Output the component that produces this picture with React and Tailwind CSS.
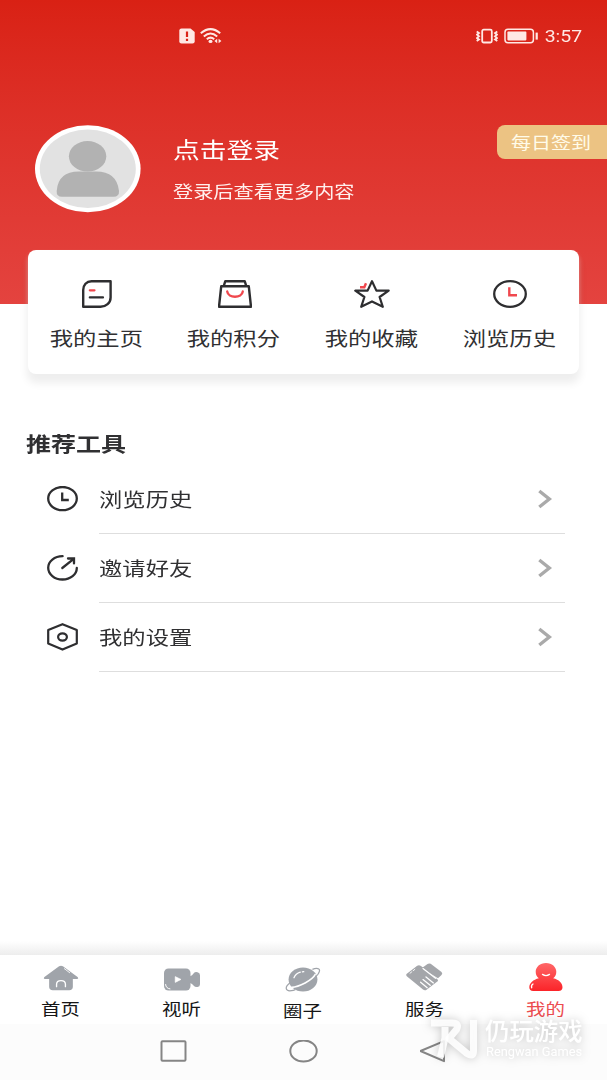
import { useState } from "react";

function Wide({ children, className = "" }) {
  return (
    <span className={`inline-block whitespace-nowrap scale-x-[1.215] ${className}`}>
      {children}
    </span>
  );
}

function HomepageIcon() {
  return (
    <svg width="30" height="28" viewBox="0 0 30 28" fill="none" strokeLinecap="round">
      <path
        d="M9.5 1.2H28.6V17.5C28.6 23 24 26.8 18.5 26.8H1.2V10C1.2 5 4.5 1.2 9.5 1.2Z"
        stroke="#2e2e30"
        strokeWidth="2.4"
        strokeLinejoin="round"
      />
      <path d="M7.8 10.3H12.5" stroke="#f0484e" strokeWidth="2.2" />
      <path d="M7.8 17.4H21" stroke="#2e2e30" strokeWidth="2.2" />
    </svg>
  );
}

function PointsIcon() {
  return (
    <svg width="34" height="28" viewBox="0 0 34 28" fill="none" strokeLinejoin="round" strokeLinecap="round">
      <path d="M3.2 6.3H30.8L33 26.8H1Z" stroke="#2e2e30" strokeWidth="2.4" />
      <path d="M5.8 5.8L7.3 1.2H26.7L28.2 5.8" stroke="#2e2e30" strokeWidth="2.4" />
      <path d="M9.2 11.5C10.2 18.5 23.8 18.5 24.8 11.5" stroke="#f0484e" strokeWidth="2.3" />
    </svg>
  );
}

function FavoriteIcon() {
  return (
    <svg width="36" height="28" viewBox="0 0 36 28" fill="none">
      <path
        d="M18 1.2L22.4 10.6H34.7L25.6 17L28.8 26.8L18 21.4L7.2 26.8L10.4 17L1.3 10.6H13.6Z"
        stroke="#2e2e30"
        strokeWidth="2.2"
        strokeLinejoin="round"
      />
      <path d="M6 7.2H10.3L12 3.2" stroke="#f0484e" strokeWidth="2.4" />
    </svg>
  );
}

function HistoryIcon() {
  return (
    <svg width="34" height="28" viewBox="0 0 34 28" fill="none">
      <ellipse cx="17" cy="14" rx="15.8" ry="12.8" stroke="#2e2e30" strokeWidth="2.3" />
      <path d="M16.3 7.3V15.2H24" stroke="#f0484e" strokeWidth="2.4" />
    </svg>
  );
}

function ClockIcon() {
  return (
    <svg width="31" height="26" viewBox="0 0 31 26" fill="none">
      <ellipse cx="15.5" cy="12.6" rx="14.3" ry="11.6" stroke="#2e2e30" strokeWidth="2.3" />
      <path d="M15.2 6.6V14H21.8" stroke="#2e2e30" strokeWidth="2.3" />
    </svg>
  );
}

function InviteIcon() {
  return (
    <svg width="31" height="26" viewBox="0 0 31 26" fill="none" stroke="#2e2e30" strokeWidth="2.3" strokeLinecap="round">
      <path d="M15.6 1.2C7.5 1.2 1.2 6.4 1.2 12.8S7.5 24.5 15.5 24.5S29.8 19.3 29.8 13" />
      <path d="M15.3 13L26.4 4.2M21 3.5H27V8.4" />
    </svg>
  );
}

function SettingsIcon() {
  return (
    <svg width="31" height="28" viewBox="0 0 31 28" fill="none" stroke="#2e2e30" strokeWidth="2.2" strokeLinejoin="round">
      <path d="M15.5 1.2L29.8 7.1V20.5L15.5 26.6L1.2 20.5V7.1Z" />
      <ellipse cx="15.5" cy="14" rx="4.4" ry="3.6" />
    </svg>
  );
}

function HouseIcon() {
  return (
    <svg width="36" height="26" viewBox="0 0 36 27">
      <path
        d="M16 1.3Q18 .1 20 1.3L35.2 12.4Q36.8 14.2 34.6 14.6H30.3V22.6Q30.3 26.2 26.5 26.2H9.5Q5.7 26.2 5.7 22.6V14.6H1.4Q-.8 14.2 .8 12.4Z"
        fill="#a0a4aa"
      />
      <path d="M13.4 22.5V20C13.4 15 22.6 15 22.6 20V22.5" fill="none" stroke="#fff" strokeWidth="1.4" strokeLinecap="round" />
      <path d="M21.5 3.8L27 8" fill="none" stroke="#fff" strokeWidth=".9" strokeLinecap="round" />
    </svg>
  );
}

function VideoIcon() {
  return (
    <svg width="36" height="23" viewBox="0 0 36 23">
      <rect x="0" y=".5" width="26.5" height="22" rx="4.5" fill="#a0a4aa" />
      <path d="M26 8.2Q28.3 7.6 29.5 5.4Q31 3.6 33.5 4.2Q36 4.7 36 7.2V16.2Q36 18.6 33.5 19Q31 19.3 29.5 17.4Q28.3 15.4 26 14.9Z" fill="#a0a4aa" />
      <path d="M11.2 8.6L17 11.4L11.2 14.4Z" fill="#fff" stroke="#fff" strokeWidth=".6" strokeLinejoin="round" />
      <path d="M1.6 16.5Q1.8 20.4 6 20.9" fill="none" stroke="#fff" strokeWidth="1" strokeLinecap="round" />
    </svg>
  );
}

function PlanetIcon() {
  return (
    <svg className="translate-y-px" width="36" height="25" viewBox="0 0 36 26" fill="none">
      <ellipse cx="18" cy="13" rx="15" ry="12.6" fill="#a0a4aa" />
      <path d="M6 21.2C14 21 27.5 14 31 7.5" stroke="#fff" strokeWidth="1.7" />
      <path d="M27.8 2.5C32 .6 36.2 1.2 35 4.8C34.5 6.8 33.1 8.3 31.6 9.8M4.6 16.3C-1.2 20.5-.8 25.5 6 24.6C7.6 24.4 9 23.9 10 23.5" stroke="#a0a4aa" strokeWidth="1.3" />
      <path d="M8.6 11.2C9.8 8 12 6.3 15.2 5.3M17.3 5L18.8 4.9" stroke="#fff" strokeWidth="1.3" strokeLinecap="round" />
    </svg>
  );
}

function HandshakeIcon() {
  return (
    <svg width="37" height="28" viewBox="0 0 37 28">
      <path d="M15.6 5.3L21.5 .9Q23 0 24.7 .8L35.5 9.1Q37 10.5 35.5 12L32 15.3Z" fill="#a4a6aa" />
      <path d="M.8 10.8L11.2 2.7Q13 1.6 15 2.9L31.6 16.5Q32.6 17.8 31 18.8L20.6 26.7Q18.8 27.8 17 26.6L.8 13.2Q-.4 12 .8 10.8Z" fill="#a4a6aa" />
      <path d="M17 5.6L29.5 15.2M20 13.9L27.4 19.9M17 16.6L24.2 22.3M14.6 19.2L21.2 24.7" fill="none" stroke="#fff" strokeWidth="1.3" strokeLinecap="round" />
      <path d="M3.7 10.5L9.3 6" stroke="#fff" strokeWidth=".9" strokeDasharray="3 1" />
    </svg>
  );
}

function ProfileIcon() {
  return (
    <svg width="34" height="28" viewBox="0 0 34 28">
      <defs>
        <linearGradient id="profile" x1="0" y1="0" x2="0" y2="1">
          <stop offset="0" stopColor="#ff6768" />
          <stop offset="1" stopColor="#fb2429" />
        </linearGradient>
      </defs>
      <path
        d="M17 0C23 0 27.3 4 27.3 8.8C27.3 11.5 26.2 13.6 24.2 15.3C30 16.7 33.5 20 33.5 24.3Q33.5 28 29.5 28H4.2Q.3 28 .3 24.3C.3 20 4.3 16.7 9.8 15.3C7.8 13.6 6.7 11.5 6.7 8.8C6.7 4 11 0 17 0Z"
        fill="url(#profile)"
      />
      <path d="M13.5 11.4Q17 13.8 20.5 11.4M4 21Q1.9 22.3 2.7 24.8" fill="none" stroke="#fff" strokeWidth="1.3" strokeLinecap="round" />
    </svg>
  );
}

const shortcuts = [
  { label: "我的主页", Icon: HomepageIcon },
  { label: "我的积分", Icon: PointsIcon },
  { label: "我的收藏", Icon: FavoriteIcon },
  { label: "浏览历史", Icon: HistoryIcon },
];

const tools = [
  { label: "浏览历史", Icon: ClockIcon },
  { label: "邀请好友", Icon: InviteIcon },
  { label: "我的设置", Icon: SettingsIcon },
];

const tabs = [
  { label: "首页", Icon: HouseIcon, gap: "mt-[5px]" },
  { label: "视听", Icon: VideoIcon, gap: "mt-[5px]" },
  { label: "圈子", Icon: PlanetIcon, gap: "mt-[7px]" },
  { label: "服务", Icon: HandshakeIcon, gap: "mt-[5px]" },
  { label: "我的", Icon: ProfileIcon, gap: "mt-[5px]" },
];

function StatusBar() {
  return (
    <div className="flex h-[72px] items-center justify-between pl-[179px] pr-[25px] text-[#ffe9e5]">
      <div className="flex items-center gap-[5px]">
        <svg width="16" height="16" viewBox="0 0 16 16">
          <path d="M2.5 .5H11.5L15.7 4V13.5Q15.7 15.5 13.5 15.5H2.5Q.3 15.5 .3 13.5V2.5Q.3 .5 2.5 .5Z" fill="currentColor" />
          <path d="M8 3.4V9M8 10.8V13" stroke="#db2418" strokeWidth="2.2" />
        </svg>
        <svg width="22" height="16" viewBox="0 0 22 16" fill="none" stroke="currentColor" strokeWidth="2">
          <path d="M.8 5.3Q10.5-3 20.2 5.3M3.8 8.4Q10.5 2.7 17.2 8.4M6.8 11.2Q10.5 8 14.2 11.2" />
          <ellipse cx="10.5" cy="13.4" rx="2" ry="1.6" fill="currentColor" stroke="none" />
          <path d="M17.2 10.8V15.2L14.4 13ZM18.6 10.8V15.2L21.4 13Z" fill="currentColor" stroke="none" />
        </svg>
      </div>
      <div className="flex items-center">
        <svg width="22" height="16" viewBox="0 0 22 16" fill="none" stroke="currentColor" strokeWidth="1.8">
          <rect x="6.2" y="1.7" width="9.6" height="12.8" rx="1.5" />
          <path d="M.7 3.5L3 5L1 6.7L3 8.3L1 10L3 11.5L.7 13M21.3 3.5L19 5L21 6.7L19 8.3L21 10L19 11.5L21.3 13" />
        </svg>
        <svg className="ml-1.5" width="35" height="16" viewBox="0 0 35 16">
          <rect x="1" y="1.2" width="28.4" height="13.6" rx="3" fill="none" stroke="currentColor" strokeWidth="1.5" />
          <rect x="3.4" y="3.6" width="19" height="8.8" rx=".8" fill="currentColor" />
          <rect x="31.6" y="4.6" width="2.2" height="7" fill="currentColor" />
        </svg>
        <div className="ml-1.5 w-[37px] text-center">
          <Wide className="-mx-2 font-['Roboto',sans-serif] text-base/6">3:57</Wide>
        </div>
      </div>
    </div>
  );
}

function Watermark() {
  return (
    <div className="pointer-events-none absolute right-[25px] bottom-[20px] flex items-start gap-2 text-white drop-shadow-[0_0_5px_rgba(0,0,0,0.26)]">
      <svg className="mt-0.5" width="48" height="40" viewBox="0 0 48 40" fill="none" stroke="#fff" strokeOpacity=".88">
        <path d="M2 4H23Q31 4 27.5 10.5L20 19.5L38 34.5Q44.5 38.5 44.5 32V1" strokeWidth="7" strokeLinejoin="round" />
        <path d="M16 8V19L11.5 38" strokeWidth="7" />
      </svg>
      <div className="w-[97px]">
        <div className="text-[24.4px]/[25px] font-medium whitespace-nowrap">仍玩游戏</div>
        <div className="mt-0.5 pl-px font-['Roboto',sans-serif] text-[12.8px]/4 whitespace-nowrap">
          Rengwan Games
        </div>
      </div>
    </div>
  );
}

export default function App() {
  const [activeTab, setActiveTab] = useState("我的");

  return (
    <div className="relative flex h-[1080px] w-[607px] flex-col overflow-hidden bg-white font-['Noto_Sans_CJK_SC',sans-serif] text-[#303032]">
      <header className="h-[304px] shrink-0 bg-linear-to-b from-[#d92114] to-[#e4433f]">
        <StatusBar />
        <div className="flex items-start pt-[53px] pl-[35px]">
          <svg width="106" height="88" viewBox="0 0 106 88">
            <ellipse cx="52.8" cy="43.8" rx="52.8" ry="43.5" fill="#fff" />
            <ellipse cx="52.8" cy="43.8" rx="48" ry="39.3" fill="#e2e2e2" />
            <path d="M21.7 66Q23 46.5 44 46.5H61Q82 46.5 84 66Q84.3 71.8 78.5 71.8H27Q21.3 71.8 21.7 66Z" fill="#b2b2b2" />
            <ellipse cx="52.6" cy="31.3" rx="18.7" ry="15.3" fill="#b2b2b2" />
          </svg>
          <div className="ml-[31.5px] flex flex-col items-start pt-[7px] text-white">
            <Wide className="origin-left text-[22px]/8">点击登录</Wide>
            <Wide className="mt-[15px] origin-left text-[16.6px]/6 text-[#fff0ee]">登录后查看更多内容</Wide>
          </div>
          <button className="ml-auto h-[34px] w-[110px] rounded-l-lg bg-[#ecc383] text-[16.5px] text-[#fffbe9]">
            <Wide className="-translate-x-px">每日签到</Wide>
          </button>
        </div>
      </header>

      <section className="relative mx-7 -mt-[54px] grid h-[124px] shrink-0 grid-cols-4 rounded-lg bg-white shadow-[0_8px_9px_1px_rgba(0,0,0,0.07),0_4px_5px_rgba(255,255,255,0.45)]">
        {shortcuts.map(({ label, Icon }) => (
          <button key={label} className="flex flex-col items-center pt-[30px]">
            <Icon />
            <Wide className="mt-4 -translate-x-px text-[19.2px]/7">{label}</Wide>
          </button>
        ))}
      </section>

      <main className="grow pt-[53px]">
        <h2 className="pl-[26px] text-[20.6px]/8 font-bold">
          <Wide className="origin-left">推荐工具</Wide>
        </h2>
        <ul className="mt-[5.5px]">
          {tools.map(({ label, Icon }) => (
            <li key={label} className="flex h-[69.2px] pl-[47px]">
              <span className="flex w-[31px] items-center">
                <Icon />
              </span>
              <span className="ml-[21px] flex w-[466px] items-center justify-between border-b border-[#dedede] pt-px pr-3">
                <Wide className="origin-left text-[19.2px]/7">{label}</Wide>
                <svg width="16" height="20" viewBox="0 0 16 20" fill="none">
                  <path d="M2.3 2L12.3 10L2.3 18" stroke="#aaa" strokeWidth="3.4" />
                </svg>
              </span>
            </li>
          ))}
        </ul>
      </main>

      <div className="h-3.5 shrink-0 bg-linear-to-b from-white to-[#ededed]" />
      <nav className="grid h-[69px] shrink-0 grid-cols-5 bg-white">
        {tabs.map(({ label, Icon, gap }) => (
          <button
            key={label}
            onClick={() => setActiveTab(label)}
            className={`flex flex-col items-center pt-2 ${activeTab === label ? "text-[#ec4c50]" : "text-[#161616]"}`}
          >
            <span className="flex h-7 items-end">
              <Icon />
            </span>
            <Wide className={`-translate-x-[0.5px] text-[16px]/6 ${gap}`}>{label}</Wide>
          </button>
        ))}
      </nav>
      <div className="flex h-14 shrink-0 items-center justify-center gap-[102px] bg-[#fcfcfc]">
        <svg width="27" height="24" viewBox="0 0 27 24" fill="none" stroke="#858585" strokeWidth="2">
          <rect x="1.5" y="1.2" width="24" height="19.6" rx="1" />
        </svg>
        <svg width="29" height="24" viewBox="0 0 29 24" fill="none" stroke="#858585" strokeWidth="2">
          <ellipse cx="14.5" cy="11" rx="13.2" ry="10.6" />
        </svg>
        <svg width="27" height="24" viewBox="0 0 27 24" fill="none" stroke="#858585" strokeWidth="2" strokeLinejoin="round">
          <path d="M.5 11L24 1.2V21.2Z" />
        </svg>
      </div>
      <Watermark />
    </div>
  );
}
